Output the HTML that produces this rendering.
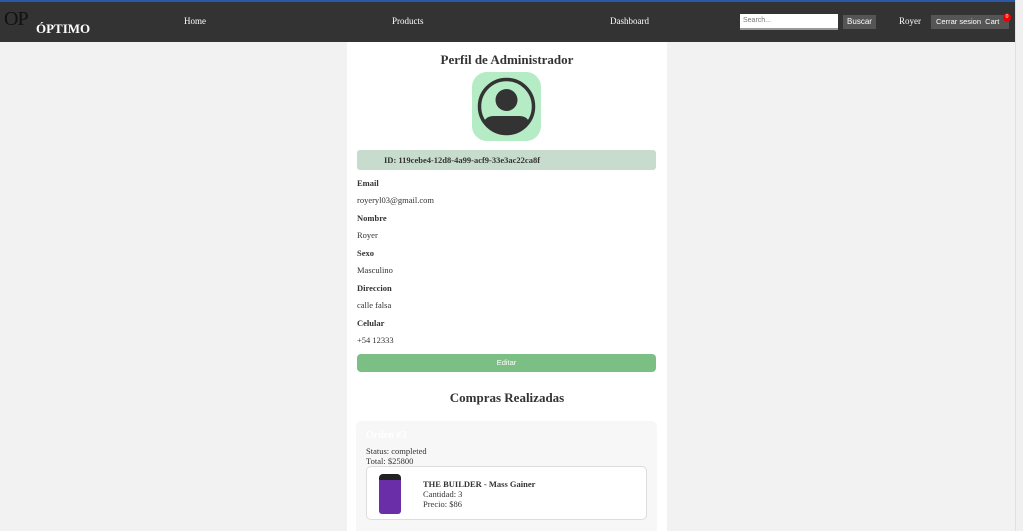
<!DOCTYPE html>
<html style="overflow:hidden;height:531px"><head><meta charset="utf-8"><style>
*{box-sizing:border-box;margin:0;padding:0}
body{width:1023px;height:531px;overflow:hidden;background:#f2f2f2;font-family:"Liberation Serif",serif;color:#333;position:relative;font-size:9px}
.nav{position:absolute;left:0;top:0;width:1015px;height:42px;background:#333;border-top:2px solid #2b58a6}
.abs{position:absolute}
.w{color:#fff}
.btn{position:absolute;background:#555;color:#fff;font-size:8px;text-align:center;line-height:13px;height:14px;white-space:nowrap}
.card{position:absolute;left:347px;top:42px;width:320px;height:489px;background:#fff;overflow:hidden}
.lbl{position:absolute;left:10px;font-weight:bold;font-size:8.5px}
.val{position:absolute;left:10px;font-size:8.5px}
.sb{position:absolute;right:0;top:0;width:8px;height:531px;background:#f0f0f0;border-left:1px solid #e0e0e0}
</style></head><body>
<div class="nav">
<div class="abs" style="left:4px;top:6px;font-size:20px;color:#111;letter-spacing:-1px">OP</div>
<div class="abs w" style="left:36px;top:19px;font-size:13px;font-weight:bold">ÓPTIMO</div>
<div class="abs w" style="left:184px;top:14px;font-size:9px">Home</div>
<div class="abs w" style="left:392px;top:14px;font-size:9px">Products</div>
<div class="abs w" style="left:610px;top:14px;font-size:9px">Dashboard</div>
<div class="abs" style="left:740px;top:12px;width:98px;height:16px;background:#fff;border-bottom:2px solid #999;font-family:'Liberation Sans',sans-serif;font-size:7px;color:#777;padding:3px 3px">Search...</div>
<div class="btn" style="left:843px;top:13px;width:33px;font-family:'Liberation Sans',sans-serif">Buscar</div>
<div class="abs w" style="left:899px;top:14px;font-size:9px">Royer</div>
<div class="btn" style="left:931px;top:13px;width:78px;font-family:'Liberation Sans',sans-serif;font-size:7.5px;text-align:left;padding-left:5px">Cerrar sesion &nbsp;Cart</div>
<div class="abs" style="left:1003px;top:11px;width:8px;height:9px;border-radius:50%;background:#e00;color:#fff;font-size:6px;text-align:center;line-height:9px">0</div>
</div>
<div class="card">
<div class="abs" style="left:0;width:320px;top:10px;text-align:center;font-size:13px;font-weight:bold">Perfil de Administrador</div>
<div class="abs" style="left:125px;top:30px;width:69px;height:69px;border-radius:15px;background:#b5ecc5">
<svg width="69" height="69" viewBox="0 0 69 69"><circle cx="34.5" cy="34.5" r="27" fill="none" stroke="#333" stroke-width="3.5"/><circle cx="34.5" cy="28" r="11" fill="#333"/><path d="M12 50 Q14 44 22 44 H47 Q55 44 57 50 A27 27 0 0 1 12 50Z" fill="#333"/></svg></div>
<div class="abs" style="left:10px;top:108px;width:299px;height:20px;background:#c8dccd;border-radius:3px;font-weight:bold;font-size:8.5px;line-height:20px;padding-left:27px">ID: 119cebe4-12d8-4a99-acf9-33e3ac22ca8f</div>
<div class="lbl" style="top:136px">Email</div><div class="val" style="top:153px">royeryl03@gmail.com</div>
<div class="lbl" style="top:171px">Nombre</div><div class="val" style="top:188px">Royer</div>
<div class="lbl" style="top:206px">Sexo</div><div class="val" style="top:223px">Masculino</div>
<div class="lbl" style="top:241px">Direccion</div><div class="val" style="top:258px">calle falsa</div>
<div class="lbl" style="top:276px">Celular</div><div class="val" style="top:293px">+54 12333</div>
<div class="abs" style="left:10px;top:312px;width:299px;height:18px;background:#7bbf84;border-radius:4px;color:#fff;font-family:'Liberation Sans',sans-serif;font-size:7.5px;text-align:center;line-height:18px">Editar</div>
<div class="abs" style="left:0;width:320px;top:348px;text-align:center;font-size:13px;font-weight:bold">Compras Realizadas</div>
<div class="abs" style="left:9px;top:379px;width:301px;height:120px;background:#f7f7f7;border-radius:6px">
<div class="abs w" style="left:10px;top:9px;font-size:10px;font-weight:bold">Orden #3</div>
<div class="abs" style="left:10px;top:25px;font-size:8.5px;line-height:10px">Status: completed<br>Total: $25800</div>
<div class="abs" style="left:10px;top:45px;width:281px;height:54px;background:#fff;border:1px solid #ddd;border-radius:5px">
<div class="abs" style="left:12px;top:7px;width:22px;height:40px;background:#6a2fa8;border-radius:4px 4px 3px 3px;border-top:6px solid #222"></div>
<div class="abs" style="left:56px;top:12px;font-size:8.5px;line-height:10px"><b>THE BUILDER - Mass Gainer</b><br>Cantidad: 3<br>Precio: $86</div>
</div></div>
</div>
<div class="sb"></div>
</body></html>
